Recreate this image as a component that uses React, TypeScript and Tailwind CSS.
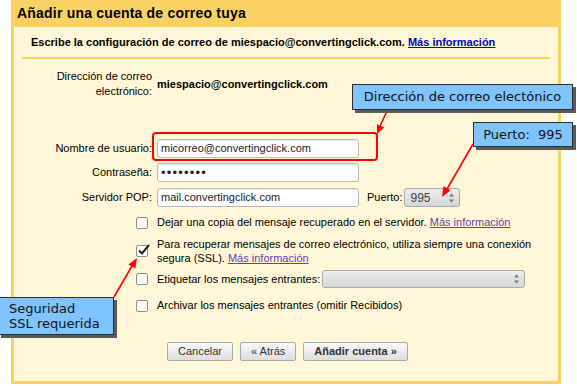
import React from 'react';

const arial = { fontFamily: '"Liberation Sans", Arial, sans-serif' };

function Checkbox({ checked = false }: { checked?: boolean }) {
  return (
    <span className="relative inline-block h-[12px] w-[12px] shrink-0 rounded-[2px] border border-[#8f8f8f] bg-white">
      {checked && (
        <svg className="absolute left-[0px] top-[-3px]" width="14" height="14" viewBox="0 0 14 14">
          <path d="M2 7.5 L5 10.5 L12 2" fill="none" stroke="#222" strokeWidth="2" />
        </svg>
      )}
    </span>
  );
}

function Spinner() {
  return (
    <svg width="7" height="12" viewBox="0 0 7 12" className="shrink-0">
      <path d="M1 4.5 L3.5 1.5 L6 4.5 Z" fill="#777" />
      <path d="M1 7.5 L3.5 10.5 L6 7.5 Z" fill="#777" />
    </svg>
  );
}

function Input({ value, password = false }: { value: string; password?: boolean }) {
  return (
    <div className="flex h-[19px] w-[202px] items-center rounded-[3px] border border-[#b9b9b9] bg-white px-[3px] text-[11px] text-[#222] shadow-[inset_0_1px_1px_rgba(0,0,0,0.08)]">
      {password ? <span className="text-[13px] leading-none tracking-[1.2px]">{value}</span> : value}
    </div>
  );
}

function Button({ label, bold = false }: { label: string; bold?: boolean }) {
  return (
    <button
      className={`h-[19px] rounded-[2px] border border-[#aaa] bg-gradient-to-b from-[#f9f9f9] to-[#dedede] px-[10px] text-[11px] leading-none text-[#333] ${bold ? 'font-bold' : ''}`}
    >
      {label}
    </button>
  );
}

function Callout({ className, children }: { className: string; children: React.ReactNode }) {
  return (
    <div
      className={`absolute border border-[#2e2e2e] bg-[#80c4fd] text-[13px] text-[#111] shadow-[3px_3px_0_#5a5a5a] ${className}`}
      style={{ fontFamily: '"DejaVu Sans", sans-serif' }}
    >
      {children}
    </div>
  );
}

export default function App() {
  return (
    <div className="relative h-[386px] w-[577px] overflow-hidden bg-white" style={arial}>
      <div className="ml-[11px] w-[550px] bg-[#fad163] px-[3px] pb-[3px]">
        <div className="flex h-[27px] items-center pl-[3px] text-[14px] font-bold tracking-[0.2px] text-black">
          Añadir una cuenta de correo tuya
        </div>

        <div className="h-[354px] bg-[#fff7d7] text-[11px] text-black">
          <div className="pl-[17px] pt-[9px] font-bold leading-[13px]">
            Escribe la configuración de correo de miespacio@convertingclick.com.{' '}
            <a className="text-[#0000cc] underline">Más información</a>
          </div>
          <div className="mx-[8px] mt-[8px] h-[2px] bg-[#fad163]" />

          {/* datos de la cuenta */}
          <div className="mt-[10px] flex items-center gap-[5px]">
            <div className="w-[138px] text-right leading-[15px]">
              Dirección de correo
              <br />
              electrónico:
            </div>
            <div className="font-bold">miespacio@convertingclick.com</div>
          </div>

          <div className="mt-[40px] flex items-center gap-[5px]">
            <div className="w-[138px] text-right">Nombre de usuario:</div>
            <Input value="micorreo@convertingclick.com" />
          </div>
          <div className="mt-[5px] flex items-center gap-[5px]">
            <div className="w-[138px] text-right">Contraseña:</div>
            <Input value="••••••••" password />
          </div>
          <div className="mt-[6px] flex items-center gap-[5px]">
            <div className="w-[138px] text-right">Servidor POP:</div>
            <Input value="mail.convertingclick.com" />
            <span className="ml-[3px]">Puerto:</span>
            <div className="ml-[-3px] flex h-[19px] w-[56px] items-center justify-between rounded-[3px] border border-[#aaa] bg-gradient-to-b from-[#eee] to-[#d6d6d6] pl-[5px] pr-[4px] text-[12px] text-[#444]">
              995
              <Spinner />
            </div>
          </div>

          {/* opciones */}
          <div className="ml-[122px] mt-[8px] flex items-center gap-[9px] leading-[15px]">
            <Checkbox />
            <span>
              Dejar una copia del mensaje recuperado en el servidor.{' '}
              <a className="text-[#6b3db0] underline">Más información</a>
            </span>
          </div>
          <div className="ml-[122px] mt-[7px] flex items-center gap-[9px] leading-[14px]">
            <Checkbox checked />
            <span>
              Para recuperar mensajes de correo electrónico, utiliza siempre una conexión
              <br />
              segura (SSL). <a className="text-[#6b3db0] underline">Más información</a>
            </span>
          </div>
          <div className="ml-[122px] mt-[5px] flex items-center gap-[9px]">
            <Checkbox />
            <span>Etiquetar los mensajes entrantes:</span>
            <div className="ml-[-7px] flex h-[18px] w-[203px] items-center justify-end rounded-[3px] border border-[#aaa] bg-gradient-to-b from-[#eee] to-[#d6d6d6] pr-[4px]">
              <Spinner />
            </div>
          </div>
          <div className="ml-[122px] mt-[10px] flex items-center gap-[9px] leading-[15px]">
            <Checkbox />
            <span>Archivar los mensajes entrantes (omitir Recibidos)</span>
          </div>

          <div className="ml-[153px] mt-[29px] flex gap-[7px]">
            <Button label="Cancelar" />
            <Button label="« Atrás" />
            <Button label="Añadir cuenta »" bold />
          </div>
        </div>
      </div>

      {/* anotaciones */}
      <div className="pointer-events-none absolute left-[152px] top-[132px] h-[29px] w-[226px] rounded-[4px] border-2 border-[#f00]" />

      <svg className="pointer-events-none absolute left-0 top-0" width="577" height="386">
        <line x1="387" y1="111" x2="380" y2="126" stroke="#f00" strokeWidth="1.6" />
        <polygon points="377,134 384.3,127.4 376.9,124.2" fill="#f00" />
        <line x1="473" y1="144" x2="447" y2="189" stroke="#f00" strokeWidth="1.6" />
        <polygon points="442,197 450.5,190.3 443.5,186.3" fill="#f00" />
        <line x1="114" y1="297" x2="132" y2="266" stroke="#f00" strokeWidth="1.6" />
        <polygon points="137,258 135.3,268.6 128.5,264.6" fill="#f00" />
      </svg>

      <Callout className="left-[352px] top-[84px] flex h-[26px] w-[221px] items-center justify-center">
        Dirección de correo electónico
      </Callout>
      <Callout className="left-[473px] top-[122px] flex h-[25px] w-[100px] items-center justify-center whitespace-pre">
        {'Puerto:  995'}
      </Callout>
      <Callout className="left-[-2px] top-[297px] h-[38px] w-[116px] pl-[10px] pt-[3px] leading-[15px]">
        Seguridad
        <br />
        SSL requerida
      </Callout>
    </div>
  );
}
